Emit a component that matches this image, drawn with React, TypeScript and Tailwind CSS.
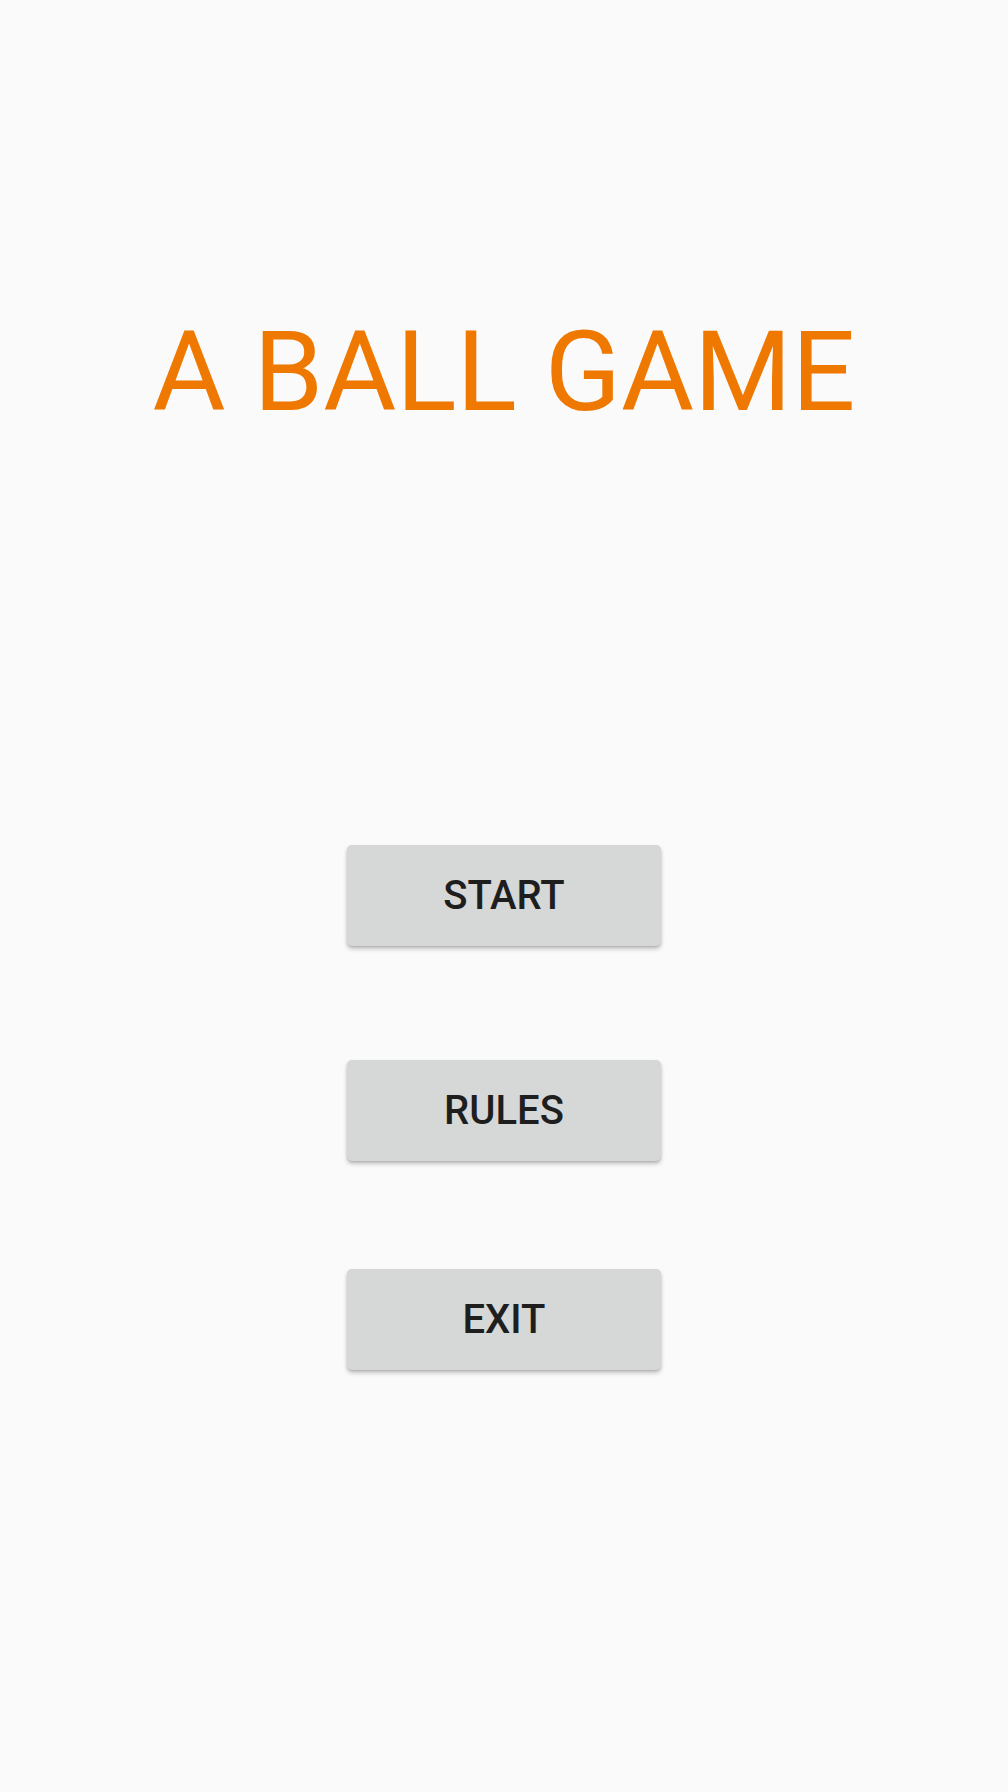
import React from "react";

function MenuButton({ label, className = "" }: { label: string; className?: string }) {
  return (
    <button
      className={`w-[314px] h-[101px] rounded-[5px] bg-[#d6d7d7] text-[#1e1e1e] text-[40px] font-medium flex items-center justify-center shadow-[0_3px_4px_rgba(0,0,0,0.22),0_1px_2px_rgba(0,0,0,0.12)] ${className}`}
      style={{ fontFamily: "Roboto, 'Liberation Sans', sans-serif" }}
    >
      {label}
    </button>
  );
}

export default function App() {
  return (
    <div
      className="w-[1008px] h-[1792px] bg-[#fafafa] flex flex-col items-center"
      style={{ fontFamily: "Roboto, 'Liberation Sans', sans-serif" }}
    >
      <div className="pt-[288px] text-[112px] leading-normal text-[#ef7800] whitespace-nowrap">
        A BALL GAME
      </div>
      <MenuButton label="START" className="mt-[389px]" />
      <MenuButton label="RULES" className="mt-[114px]" />
      <MenuButton label="EXIT" className="mt-[108px]" />
    </div>
  );
}
